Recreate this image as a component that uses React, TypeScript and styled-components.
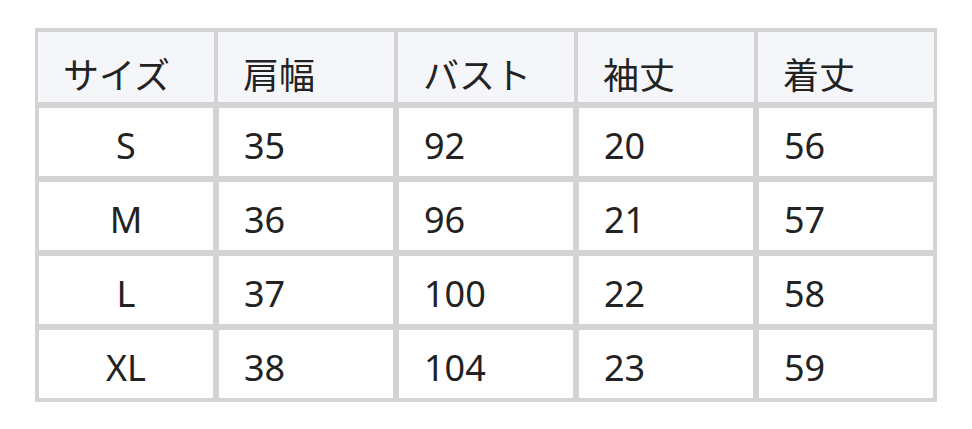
import React from 'react';
import styled, { createGlobalStyle } from 'styled-components';

const GlobalStyle = createGlobalStyle`
  html, body {
    margin: 0;
    padding: 0;
    background: #fff;
  }
  body {
    font-family: "Noto Sans", "Noto Sans CJK JP", sans-serif;
    color: #222;
  }
`;

const Page = styled.div`
  padding: 28px 0 0 35px;
`;

const SizeTable = styled.table`
  width: 902px;
  table-layout: fixed;
  border-collapse: separate;
  border-spacing: 0;
  border: 1px solid #d3d3d3;
`;

const HeadCell = styled.th`
  box-sizing: border-box;
  height: 76px;
  padding: 24px 0 0 25px;
  vertical-align: top;
  background: #f5f6fa;
  border-top: 3px solid #d3d3d3;
  border-bottom: 3px solid #d3d3d3;
  border-left: 2px solid #d3d3d3;
  border-right: 2px solid #d3d3d3;
  text-align: left;
  font-weight: 400;
  font-size: 36px;
  line-height: 40px;
  color: #222;
  white-space: nowrap;
`;

const Cell = styled.td<{ $center?: boolean }>`
  box-sizing: border-box;
  height: 74px;
  padding: ${(p) => (p.$center ? '18px 0 0 0' : '18px 0 0 25px')};
  vertical-align: top;
  border: 3px solid #d3d3d3;
  text-align: ${(p) => (p.$center ? 'center' : 'left')};
  font-size: 36px;
  line-height: 40px;
  color: #222;
  white-space: nowrap;
`;

const HEADERS = ['サイズ', '肩幅', 'バスト', '袖丈', '着丈'];

const ROWS: [string, number, number, number, number][] = [
  ['S', 35, 92, 20, 56],
  ['M', 36, 96, 21, 57],
  ['L', 37, 100, 22, 58],
  ['XL', 38, 104, 23, 59],
];

export default function App() {
  return (
    <>
      <GlobalStyle />
      <Page>
        <SizeTable>
          <thead>
            <tr>
              {HEADERS.map((h) => (
                <HeadCell key={h}>{h}</HeadCell>
              ))}
            </tr>
          </thead>
          <tbody>
            {ROWS.map(([size, ...vals]) => (
              <tr key={size}>
                <Cell $center>{size}</Cell>
                {vals.map((v, i) => (
                  <Cell key={i}>{v}</Cell>
                ))}
              </tr>
            ))}
          </tbody>
        </SizeTable>
      </Page>
    </>
  );
}
